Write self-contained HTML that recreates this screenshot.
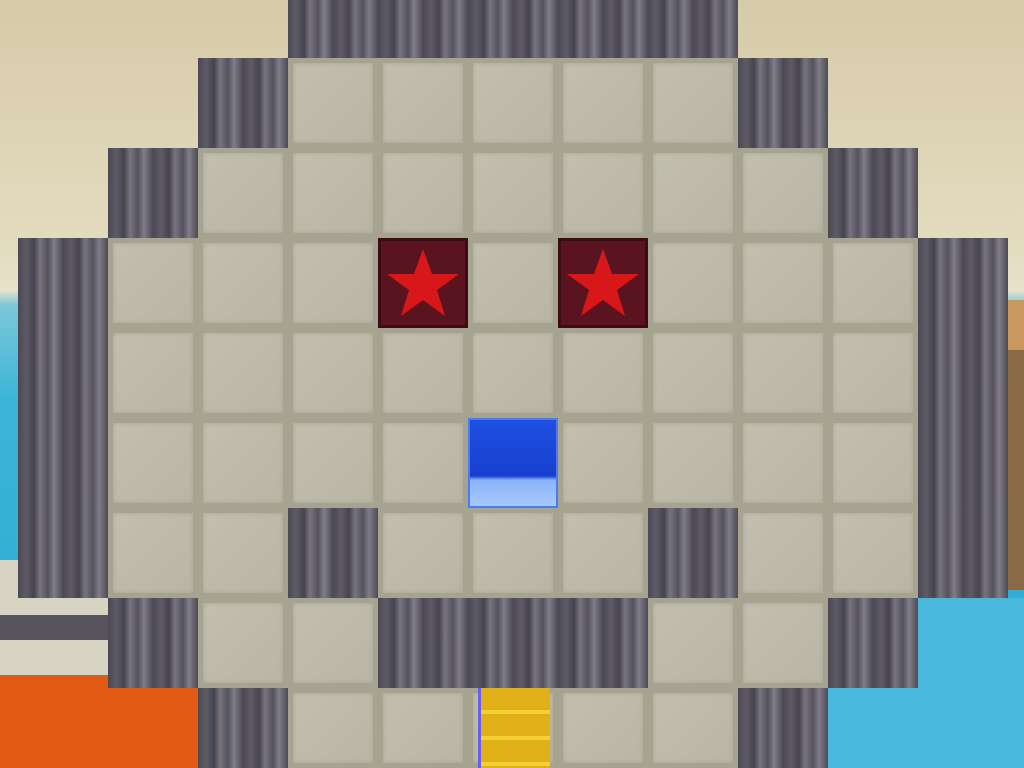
<!DOCTYPE html><html><head><style>
html,body{margin:0;width:1024px;height:768px;overflow:hidden}
body{position:relative;background:linear-gradient(#d6cba8 0px,#e4dcc0 250px,#e8e2cc 290px,#7cc8d8 305px,#3cb4d8 400px,#2aa8d0 768px);}
div{position:absolute;box-sizing:border-box}
.s{width:90px;height:90px;background:#a7a391;padding:5px}
.s::after{content:"";display:block;width:100%;height:100%;background:linear-gradient(135deg,#c2bfae,#b9b6a5);box-shadow:inset 0 0 5px #a8a493}
.d{width:90px;height:90px;background:repeating-linear-gradient(90deg,#4b4853 0,#5e5b66 8px,#46434e 16px,#77747f 22px,#55525d 30px,#807d8a 36px,#4d4a55 45px)}
</style></head><body>
<div style="left:0;top:560px;width:200px;height:120px;background:#d8d4c4"></div>
<div style="left:0;top:615px;width:110px;height:25px;background:#57545e"></div>
<div style="left:0;top:675px;width:200px;height:93px;background:#e25a14"></div>
<div style="left:828px;top:598px;width:196px;height:170px;background:#48b8dc"></div>
<div style="left:1008px;top:350px;width:16px;height:240px;background:#8a6a44"></div>
<div style="left:1008px;top:300px;width:16px;height:50px;background:#c89860"></div>
<div id="g"></div>
<script>
var m=[
"___DDDDD___",
"__DSSSSSD__",
"_DSSSSSSSD_",
"DSSSRSRSSSD",
"DSSSSSSSSSD",
"DSSSSBSSSSD",
"DSSDSSSDSSD",
"_DSSDDDSSD_",
"__DSSYSSD__"];
var ys=[-32,58,148,238,328,418,508,598,688],h="";
for(var r=0;r<9;r++)for(var c=0;c<11;c++){var t=m[r][c];if(t=="_")continue;var x=18+c*90,y=ys[r];
var hh=(r==8)?80:90;
var st='style="left:'+x+'px;top:'+y+'px;height:'+hh+'px"';
if(t=="D")h+='<div class="d" '+st+'></div>';
else if(t=="S")h+='<div class="s" '+st+'></div>';
else if(t=="R")h+='<div style="left:'+x+'px;top:'+y+'px;width:90px;height:90px;background:#5a1420;border:3px solid #3a0c14"><svg width="84" height="84" viewBox="0 0 84 84"><polygon points="42,8 51,33 78,33 56,49 64,75 42,59 20,75 28,49 6,33 33,33" fill="#d81818"/></svg></div>';
else if(t=="B")h+='<div style="left:'+x+'px;top:'+y+'px;width:90px;height:90px;background:linear-gradient(#1e4fe0 0,#1840d0 65%,#8ab4f8 70%,#a6c8ff 100%);border:2px solid #4a7cf0"></div>';
else if(t=="Y")h+='<div class="s" '+st+'></div><div style="left:'+(x+10)+'px;top:'+y+'px;width:72px;height:80px;background:repeating-linear-gradient(#e0b018 0 22px,#f4d030 22px 26px);border-left:3px solid #6a5cf0"></div>';
}
document.getElementById("g").outerHTML=h;
</script>
</body></html>
